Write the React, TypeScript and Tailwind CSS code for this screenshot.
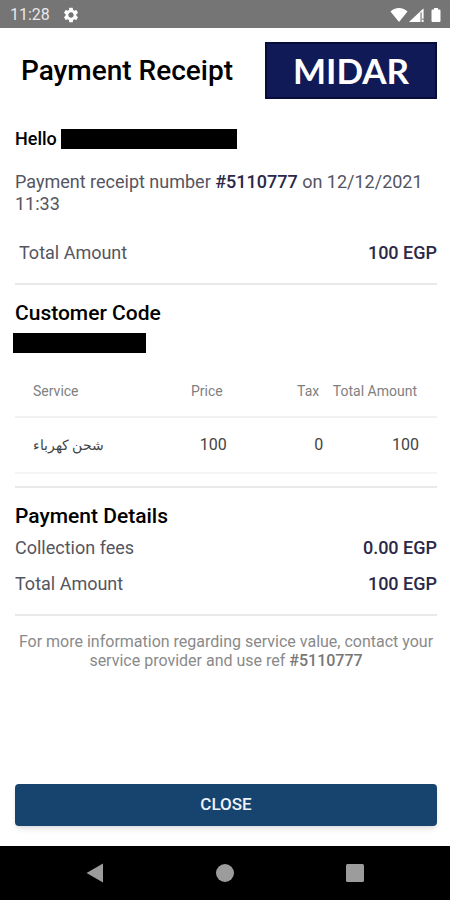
import type { ReactNode } from 'react';

type Line = { service: string; price: number; tax: number; total: number };

const receiptNumber = '#5110777';

const lines: Line[] = [{ service: 'شحن كهرباء', price: 100, tax: 0, total: 100 }];

function StatusBar() {
  return (
    <header className="flex h-7 items-center justify-between bg-[#757575] pt-px pl-2.5 pr-2 text-white">
      <div className="flex items-center gap-3 text-[#e8e8e8]">
        <span className="text-base">11:28</span>
        <svg viewBox="0 0 24 24" className="size-[18px]" fill="#fff" aria-hidden="true">
          <path d="M19.14 12.94c.04-.3.06-.61.06-.94 0-.32-.02-.64-.07-.94l2.03-1.58a.49.49 0 0 0 .12-.61l-1.92-3.32a.488.488 0 0 0-.59-.22l-2.39.96c-.5-.38-1.03-.7-1.62-.94l-.36-2.54a.484.484 0 0 0-.48-.41h-3.84c-.24 0-.43.17-.47.41l-.36 2.54c-.59.24-1.13.57-1.62.94l-2.39-.96c-.22-.08-.47 0-.59.22L2.74 8.87c-.12.21-.08.47.12.61l2.03 1.58c-.05.3-.09.63-.09.94s.02.64.07.94l-2.03 1.58a.49.49 0 0 0-.12.61l1.92 3.32c.12.22.37.29.59.22l2.39-.96c.5.38 1.03.7 1.62.94l.36 2.54c.05.24.24.41.48.41h3.84c.24 0 .44-.17.47-.41l.36-2.54c.59-.24 1.13-.56 1.62-.94l2.39.96c.22.08.47 0 .59-.22l1.92-3.32c.12-.22.07-.47-.12-.61l-2.01-1.58zM12 15.6c-1.98 0-3.6-1.62-3.6-3.6s1.62-3.6 3.6-3.6 3.6 1.62 3.6 3.6-1.62 3.6-3.6 3.6z" />
        </svg>
      </div>
      <svg viewBox="0 0 52 16" className="h-4 w-[52px]" fill="#fff" aria-hidden="true">
        <path d="M9 15 .5 4.4C2.8 2.3 5.700 1 9 1s6.200 1.300 8.500 3.400z" />
        <path d="M33.500 1.500v4h-3.300V15H19z" />
        <path d="M33.500 1.500v13.500H19z" opacity=".35" />
        <path d="M32 5.500h1.500v6H32zM32 13h1.500v2H32z" />
        <path d="M44 1h4v1.500h1.500q1 0 1 1V14q0 1-1 1h-7q-1 0-1-1V3.500q0-1 1-1H44z" />
      </svg>
    </header>
  );
}

function Divider() {
  return <hr className="border-0 border-t-2 border-[#e9e9e9]" />;
}

function AmountRow({ label, children }: { label: string; children: ReactNode }) {
  return (
    <div className="flex justify-between text-lg leading-6 text-[#55555f]">
      <dt>{label}</dt>
      <dd className="font-medium text-[#2b2848]">{children}</dd>
    </div>
  );
}

function NavBar() {
  return (
    <nav className="flex h-[54px] items-center justify-around bg-black px-[30px] text-[#9c9c9c]">
      <button aria-label="Back">
        <svg viewBox="0 0 20 20" className="size-5" fill="currentColor">
          <path d="M18 0.500v19L1.500 10z" />
        </svg>
      </button>
      <button aria-label="Home">
        <svg viewBox="0 0 20 20" className="size-5" fill="currentColor">
          <circle cx="10" cy="10" r="9" />
        </svg>
      </button>
      <button aria-label="Recents">
        <svg viewBox="0 0 20 20" className="size-5" fill="currentColor">
          <rect x="1" y="1" width="18" height="18" rx="1.500" />
        </svg>
      </button>
    </nav>
  );
}

export default function App() {
  return (
    <div className="flex min-h-screen flex-col bg-white font-['Roboto','Noto_Sans',sans-serif] text-black">
      <StatusBar />

      <main className="flex grow flex-col pt-3.5 pr-[13px] pl-[15px]">
        <div className="flex items-center justify-between pl-1.5">
          <h1 className="text-[28px] leading-8 font-medium">Payment Receipt</h1>
          <div className="flex h-[57px] w-[172px] items-center justify-center border-2 border-[#060d38] bg-[#101a56] pb-0.5 font-['Lato',sans-serif] text-[35px] leading-10 font-bold text-white">
            MIDAR
          </div>
        </div>

        <div className="mt-[30px] flex items-center gap-1">
          <span className="text-lg leading-5 font-medium">Hello</span>
          <span className="h-5 w-44 bg-black" />
        </div>

        <p className="mt-[22px] text-lg leading-[22px] text-[#55555f]">
          Payment receipt number <b className="font-medium text-[#2b2848]">{receiptNumber}</b> on
          12/12/2021 11:33
        </p>

        <dl className="mt-[26px] mb-[18px] pl-1">
          <AmountRow label="Total Amount">100 EGP</AmountRow>
        </dl>
        <Divider />

        <h2 className="mt-3.5 text-[21px] leading-7 font-medium">Customer Code</h2>
        <div className="mt-1.5 -ml-0.5 h-5 w-[133px] bg-black" />

        <table className="mt-3 mb-3 w-full table-fixed">
          <colgroup>
            <col className="w-[29%]" />
            <col className="w-[24%]" />
            <col className="w-[21%]" />
            <col className="w-[26%]" />
          </colgroup>
          <thead>
            <tr className="h-[52px] border-b-2 border-[#f1f1f1] text-sm text-[#808080]">
              <th className="pl-[18px] text-left font-normal">Service</th>
              <th className="pr-4 text-right font-normal">Price</th>
              <th className="pr-2 text-right font-normal">Tax</th>
              <th className="pr-5 text-right font-normal whitespace-nowrap">Total Amount</th>
            </tr>
          </thead>
          <tbody>
            {lines.map((line) => (
              <tr key={line.service} className="h-14 border-b-2 border-[#f5f5f5] text-base text-[#444]">
                <td className="pl-[18px] text-left text-sm" lang="ar">
                  <bdi>{line.service}</bdi>
                </td>
                <td className="pr-3 text-right">{line.price}</td>
                <td className="pr-1 text-right">{line.tax}</td>
                <td className="pr-[18px] text-right">{line.total}</td>
              </tr>
            ))}
          </tbody>
        </table>
        <Divider />

        <h2 className="mt-3.5 text-[21px] leading-7 font-medium">Payment Details</h2>
        <dl className="mt-1.5 mb-[18px] flex flex-col gap-3">
          <AmountRow label="Collection fees">0.00 EGP</AmountRow>
          <AmountRow label="Total Amount">100 EGP</AmountRow>
        </dl>
        <Divider />

        <p className="mt-4 text-center text-base leading-[19px] text-[#8a8a8a]">
          For more information regarding service value, contact your service provider and use ref{' '}
          <b className="font-medium text-[#777]">{receiptNumber}</b>
        </p>

        <button className="mt-auto mb-5 h-[42px] rounded-sm bg-[#17446f] text-[17px] font-medium text-[#eef2fa] shadow-md">
          CLOSE
        </button>
      </main>

      <NavBar />
    </div>
  );
}
